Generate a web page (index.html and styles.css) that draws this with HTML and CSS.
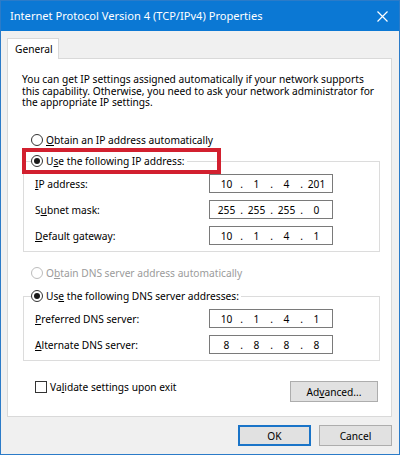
FILE: index.html
```html
<!DOCTYPE html>
<html lang="en">
<head>
<meta charset="utf-8">
<title>Internet Protocol Version 4 (TCP/IPv4) Properties</title>
<link rel="stylesheet" href="styles.css">
</head>
<body>
<div class="window">
  <div class="titlebar">
    <span class="title">Internet Protocol Version 4 (TCP/IPv4) Properties</span>
    <svg class="close" width="11" height="11" viewBox="0 0 11 11"><path d="M0.5 0.5 L10.5 10.5 M10.5 0.5 L0.5 10.5" stroke="#ffffff" stroke-width="1.2" fill="none"/></svg>
  </div>
  <div class="client">
    <div class="tabs"><div class="tab">General</div></div>
    <div class="panel">
      <p class="intro">You can get IP settings assigned automatically if your network supports this capability. Otherwise, you need to ask your network administrator for the appropriate IP settings.</p>

      <div class="option"><span class="radio"></span><span><u>O</u>btain an IP address automatically</span></div>

      <fieldset class="group">
        <legend class="option"><span class="radio checked"></span><span>U<u>s</u>e the following IP address:</span></legend>
        <div class="field"><span class="label"><u>I</u>P address:</span>
          <span class="ipbox"><span class="oct">10</span><span class="dot">.</span><span class="oct">1</span><span class="dot">.</span><span class="oct">4</span><span class="dot">.</span><span class="oct">201</span></span></div>
        <div class="field"><span class="label">S<u>u</u>bnet mask:</span>
          <span class="ipbox"><span class="oct">255</span><span class="dot">.</span><span class="oct">255</span><span class="dot">.</span><span class="oct">255</span><span class="dot">.</span><span class="oct">0</span></span></div>
        <div class="field"><span class="label"><u>D</u>efault gateway:</span>
          <span class="ipbox"><span class="oct">10</span><span class="dot">.</span><span class="oct">1</span><span class="dot">.</span><span class="oct">4</span><span class="dot">.</span><span class="oct">1</span></span></div>
      </fieldset>

      <div class="option disabled"><span class="radio"></span><span>O<u>b</u>tain DNS server address automatically</span></div>

      <fieldset class="group">
        <legend class="option"><span class="radio checked"></span><span>Us<u>e</u> the following DNS server addresses:</span></legend>
        <div class="field"><span class="label"><u>P</u>referred DNS server:</span>
          <span class="ipbox"><span class="oct">10</span><span class="dot">.</span><span class="oct">1</span><span class="dot">.</span><span class="oct">4</span><span class="dot">.</span><span class="oct">1</span></span></div>
        <div class="field"><span class="label"><u>A</u>lternate DNS server:</span>
          <span class="ipbox"><span class="oct">8</span><span class="dot">.</span><span class="oct">8</span><span class="dot">.</span><span class="oct">8</span><span class="dot">.</span><span class="oct">8</span></span></div>
      </fieldset>

      <div class="footer">
        <div class="check"><span class="box"></span><span>Va<u>l</u>idate settings upon exit</span></div>
        <button class="btn adv">Ad<u>v</u>anced...</button>
      </div>

      <div class="highlight"></div>
    </div>
    <div class="actions">
      <button class="btn ok">OK</button>
      <button class="btn">Cancel</button>
    </div>
  </div>
</div>
</body>
</html>
```

FILE: styles.css
```css
* { box-sizing: border-box; }
html, body { margin: 0; padding: 0; }
body {
  width: 400px;
  height: 455px;
  overflow: hidden;
  font-family: "Noto Sans", "Open Sans", sans-serif;
  font-size: 10.2px;
  color: #000;
  background: #f0f0f0;
}
u { text-decoration: underline; text-underline-offset: 1px; }

.window {
  width: 400px;
  height: 455px;
  border: 1px solid #2b7bc8;
  background: #f0f0f0;
  display: flex;
  flex-direction: column;
}

.titlebar {
  height: 30px;
  background: #0b78d4;
  display: flex;
  align-items: center;
  justify-content: space-between;
  padding: 0 11px 0 9px;
  flex: none;
}
.title {
  color: #fff;
  font-size: 11.1px;
  line-height: 16px;
}
.close { display: block; }

.client {
  flex: 1;
  display: flex;
  flex-direction: column;
  padding: 7px 7px 8px 6px;
}

.tabs { display: flex; position: relative; z-index: 1; }
.tab {
  width: 52px;
  height: 21px;
  margin-bottom: -1px;
  background: #fff;
  border: 1px solid #d9d9d9;
  border-bottom: none;
  padding: 2px 0 0 7px;
  line-height: 16px;
}

.panel {
  position: relative;
  background: #fff;
  border: 1px solid #d9d9d9;
  height: 359px;
  padding: 15px 11px 0 15px;
  display: flex;
  flex-direction: column;
}

.intro {
  margin: 0 0 0 -1px;
  line-height: 11.7px;
  height: 36px;
}

.option {
  display: flex;
  align-items: center;
  gap: 3px;
  height: 16px;
  line-height: 16px;
  padding-left: 8px;
}
.option.disabled { color: #9b9b9b; }
.option.disabled .radio { border-color: #bcbcbc; }

.radio {
  width: 12px;
  height: 12px;
  border: 1px solid #333;
  border-radius: 50%;
  background: #fff;
  display: flex;
  align-items: center;
  justify-content: center;
  flex: none;
}
.radio.checked::after {
  content: "";
  width: 6px;
  height: 6px;
  border-radius: 50%;
  background: #1a1a1a;
}

.panel > .option:first-of-type { margin-top: 22px; }

.group {
  margin: 5px 0 0 0;
  padding: 0 10px 6px 11px;
  border: 1px solid #dcdcdc;
  min-width: 0;
}
.group legend.option {
  padding: 0 2px 0 0;
  margin-left: -4px;
}
.disabled + .group { margin-top: 7px; }
.group + .option { margin-top: 13px; }

.field {
  display: flex;
  align-items: center;
  height: 19px;
  margin-top: 7px;
}
.group legend + .field { margin-top: 5px; }
.label { width: 174px; flex: none; }
.ipbox {
  width: 124px;
  height: 19px;
  border: 1px solid #7a7a7a;
  display: flex;
  align-items: center;
  justify-content: center;
  padding-left: 1px;
  line-height: 16px;
}
.oct { width: 24px; text-align: center; }
.dot { width: 6px; text-align: center; }

.footer {
  margin-top: 20px;
  display: flex;
  justify-content: space-between;
  align-items: flex-start;
  padding: 0 2px 0 12px;
}
.check {
  display: flex;
  align-items: center;
  gap: 3px;
  height: 14px;
  margin-top: -1px;
}
.box {
  width: 12px;
  height: 12px;
  border: 1px solid #333;
  background: #fff;
  flex: none;
}

.btn {
  font-family: inherit;
  font-size: 10.2px;
  color: #000;
  background: #e1e1e1;
  border: 1px solid #adadad;
  border-radius: 0;
  height: 21px;
  padding: 0;
  line-height: 16px;
}
.adv { width: 88px; }

.actions {
  display: flex;
  justify-content: flex-end;
  gap: 8px;
  margin-top: 8px;
}
.actions .btn { width: 73px; }
.btn.ok { border: 2px solid #1a74c8; }

.highlight {
  position: absolute;
  left: 14px;
  top: 89px;
  width: 199px;
  height: 26px;
  border: 4px solid #d2202f;
  pointer-events: none;
}
```
